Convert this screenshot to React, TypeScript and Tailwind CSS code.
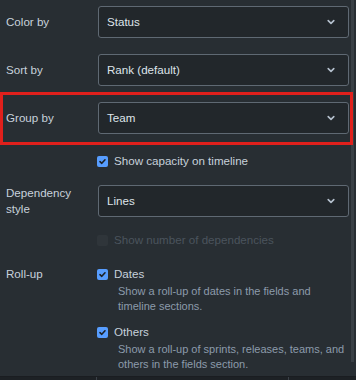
import React from "react";

const Chevron = () => (
  <svg width="8" height="6" viewBox="0 0 8 6" className="shrink-0">
    <path d="M1.2 1.6 L4 4.3 L6.8 1.6" fill="none" stroke="#b6c2cf" strokeWidth="1.6" strokeLinecap="round" strokeLinejoin="round" />
  </svg>
);

const Select = ({ value }: { value: string }) => (
  <div className="flex-1 h-[32px] flex items-center justify-between pl-[8px] pr-[13px] rounded-[3px] border border-[#5f6973] bg-[#22272b] text-[#dee4ea]">
    <span>{value}</span>
    <Chevron />
  </div>
);

const Check = ({ disabled }: { disabled?: boolean }) =>
  disabled ? (
    <div className="w-[11px] h-[11px] rounded-[2px] bg-[#2f353a] shrink-0" />
  ) : (
    <div className="w-[11px] h-[11px] rounded-[2px] bg-[#579dff] shrink-0 flex items-center justify-center">
      <svg width="9" height="9" viewBox="0 0 9 9">
        <path d="M2 4.6 L3.8 6.3 L7 2.8" fill="none" stroke="#1d2125" strokeWidth="1.6" strokeLinecap="round" strokeLinejoin="round" />
      </svg>
    </div>
  );

const Row = ({ label, children, className = "" }: { label: React.ReactNode; children: React.ReactNode; className?: string }) => (
  <div className={`flex items-center ${className}`}>
    <div className="w-[92px] shrink-0 text-[#c7d1db] leading-[16px]">{label}</div>
    {children}
  </div>
);

export default function App() {
  return (
    <div
      className="relative w-[356px] h-[380px] overflow-hidden bg-[#282e33] text-[11.6px]"
      style={{ fontFamily: "'Liberation Sans', Arial, sans-serif" }}
    >
      <div className="h-[376px]">
        <div className="h-[368px] overflow-hidden pl-[6px] pr-[7px] pt-[6px]">
          <Row label="Color by">
            <Select value="Status" />
          </Row>
          <Row label="Sort by" className="mt-[16px]">
            <Select value="Rank (default)" />
          </Row>
          <Row label="Group by" className="mt-[16px]">
            <Select value="Team" />
          </Row>
          <div className="mt-[19px] h-[16px] flex items-center pl-[91px]">
            <Check />
            <span className="ml-[6px] text-[#c7d1db]">Show capacity on timeline</span>
          </div>
          <Row
            label={
              <>
                Dependency
                <br />
                style
              </>
            }
            className="mt-[16px]"
          >
            <Select value="Lines" />
          </Row>
          <div className="mt-[15px] h-[16px] flex items-center pl-[91px]">
            <Check disabled />
            <span className="ml-[6px] text-[#4b545d]">Show number of dependencies</span>
          </div>
          <div className="mt-[18px] flex items-start">
            <div className="w-[92px] shrink-0 text-[#c7d1db] leading-[16px]">Roll-up</div>
            <div className="flex-1 -ml-[1px]">
              <div className="h-[16px] flex items-center">
                <Check />
                <span className="ml-[6px] text-[#c7d1db]">Dates</span>
              </div>
              <div className="mt-[2px] pl-[21px] text-[#8c9bab] text-[11px] leading-[15px] whitespace-nowrap">
                Show a roll-up of dates in the fields and
                <br />
                timeline sections.
              </div>
              <div className="mt-[10px] h-[16px] flex items-center">
                <Check />
                <span className="ml-[6px] text-[#c7d1db]">Others</span>
              </div>
              <div className="mt-[2px] pl-[21px] text-[#8c9bab] text-[11px] leading-[15px] whitespace-nowrap">
                Show a roll-up of sprints, releases, teams, and
                <br />
                others in the fields section.
              </div>
            </div>
          </div>
        </div>
      </div>
      <div className="h-[4px] border-t border-[#1a1d21] bg-[#1d2125] flex">
        <div className="w-[97px] border-r border-[#3b4148]" />
        <div className="w-[192px] border-r border-[#3b4148]" />
      </div>
      <div className="absolute right-[2px] top-0 w-[3px] h-[362px] bg-[#3a4046]" />
      <div className="absolute left-0 top-[92px] w-[353px] h-[53px] border-[3px] border-[#e0201c]" />
    </div>
  );
}
